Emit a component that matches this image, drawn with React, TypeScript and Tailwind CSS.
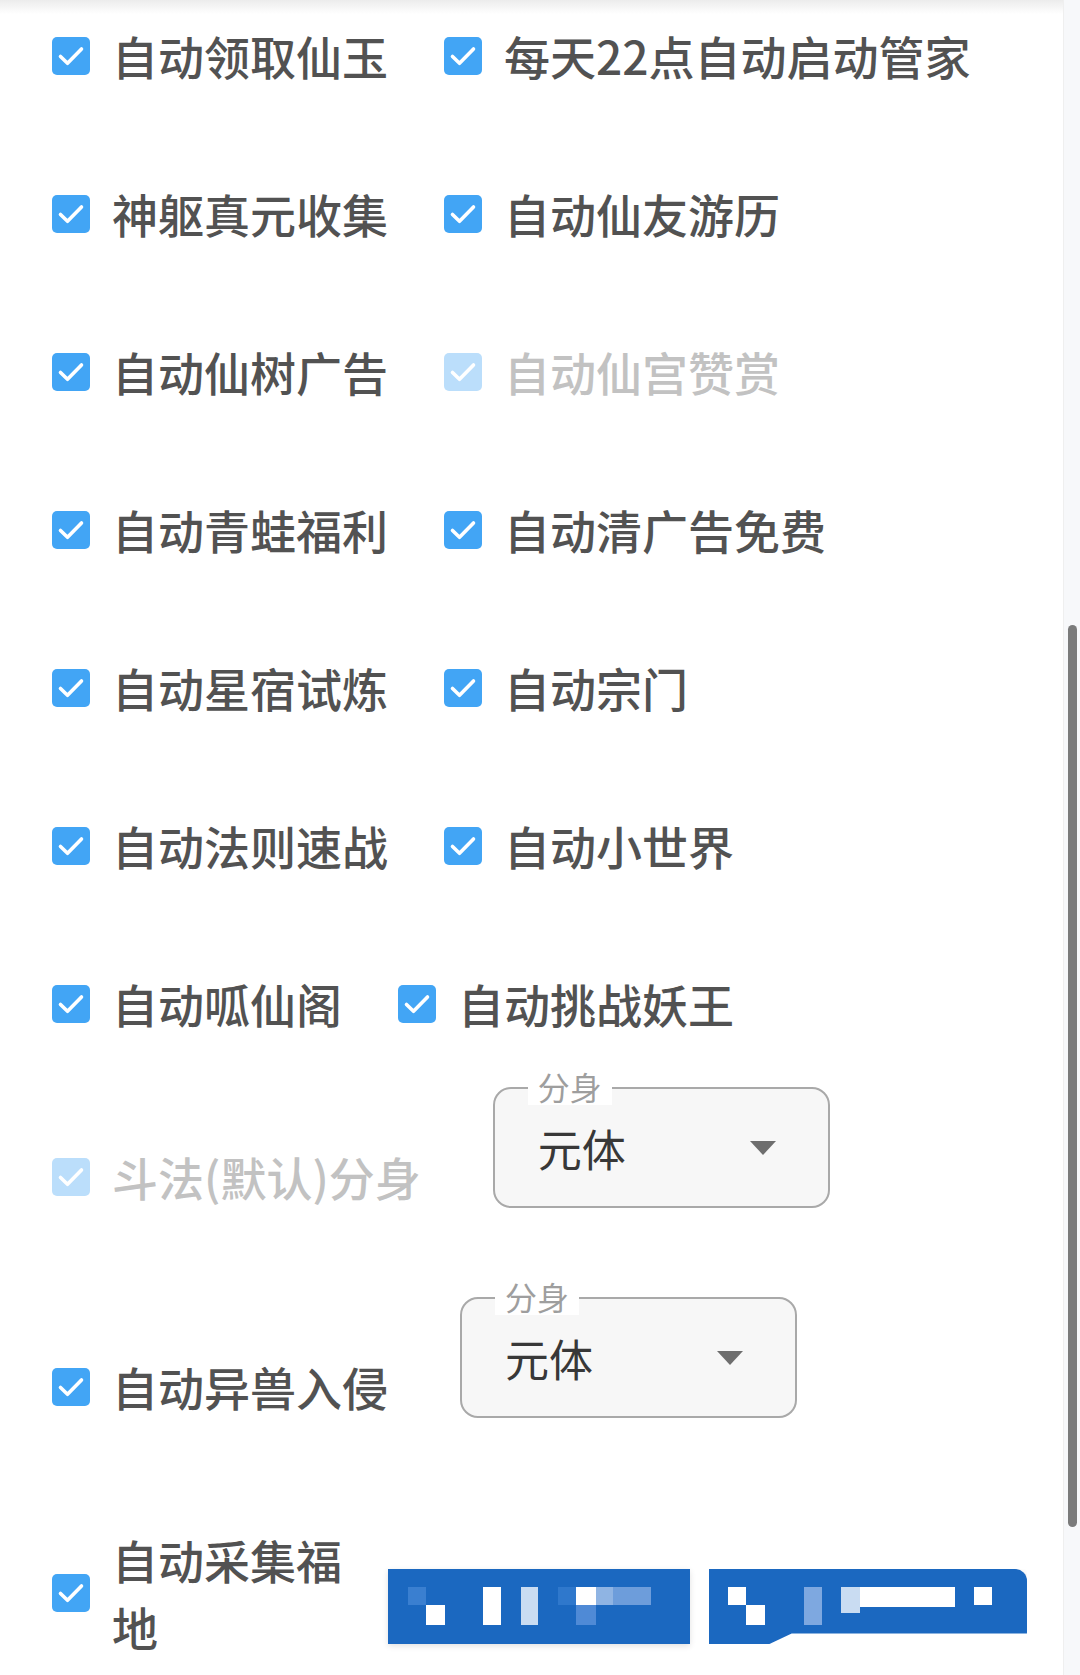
import React from "react";

const FONT = { fontFamily: '"Noto Sans CJK SC", "Noto Sans", sans-serif' };

function Check({ disabled }: { disabled?: boolean }) {
  return (
    <div
      className={
        "flex h-[38px] w-[38px] shrink-0 items-center justify-center rounded-[5px] " +
        (disabled ? "bg-[#bbdefb]" : "bg-[#42a5f5]")
      }
    >
      <svg width="38" height="38" viewBox="0 0 38 38" fill="none">
        <path d="M8.5 19.5l7 6.8L29.5 12" stroke="#ffffff" strokeWidth="3.6" strokeLinecap="round" strokeLinejoin="round" />
      </svg>
    </div>
  );
}

function Item({ label, disabled, first }: { label: string; disabled?: boolean; first?: boolean }) {
  return (
    <div className={"flex items-center " + (first ? "ml-[52px]" : "ml-[56px]")}>
      <Check disabled={disabled} />
      <span
        className={
          "ml-[22px] whitespace-nowrap text-[46px] font-medium leading-[67px] " +
          (disabled ? "text-[#c2c2c2]" : "text-[#525252]")
        }
      >
        {label}
      </span>
    </div>
  );
}

function Select() {
  return (
    <div className="mb-[58px] ml-[72px]">
      <div className="relative flex h-[121px] w-[337px] items-center justify-between rounded-[18px] border-2 border-[#a9a9a9] bg-[#f7f7f7] pl-[43px] pr-[52px]">
        <span className="absolute left-[33px] top-[-22px] bg-white px-[10px] text-[32px] leading-[38px] text-[#9e9e9e]">
          分身
        </span>
        <span className="text-[44px] leading-[60px] text-[#383838]">元体</span>
        <svg width="26" height="14" viewBox="0 0 26 14">
          <path d="M0 0h26L13 14z" fill="#6e6e6e" />
        </svg>
      </div>
    </div>
  );
}

type Block = { x: number; y: number; w: number; h: number; c: string };

function Mosaic({ w, h, blocks }: { w: number; h: number; blocks: Block[] }) {
  return (
    <svg width={w} height={h} viewBox={`0 0 ${w} ${h}`} className="block">
      {blocks.map((b, i) => (
        <rect key={i} x={b.x} y={b.y} width={b.w} height={b.h} fill={b.c} />
      ))}
    </svg>
  );
}

const b1: Block[] = [
  { x: 20, y: 18, w: 18, h: 18, c: "#3a7fd0" },
  { x: 38, y: 36, w: 19, h: 20, c: "#ffffff" },
  { x: 95, y: 18, w: 18, h: 38, c: "#ffffff" },
  { x: 133, y: 18, w: 17, h: 38, c: "#c9dcf2" },
  { x: 170, y: 18, w: 18, h: 18, c: "#2f78cc" },
  { x: 188, y: 18, w: 20, h: 18, c: "#ffffff" },
  { x: 208, y: 18, w: 17, h: 18, c: "#8fb4e3" },
  { x: 225, y: 18, w: 38, h: 18, c: "#6d9ddb" },
  { x: 188, y: 36, w: 20, h: 20, c: "#4f8ad6" },
];

const b2: Block[] = [
  { x: 19, y: 18, w: 18, h: 18, c: "#ffffff" },
  { x: 37, y: 36, w: 19, h: 20, c: "#ffffff" },
  { x: 95, y: 18, w: 18, h: 38, c: "#7ea8e0" },
  { x: 132, y: 18, w: 19, h: 26, c: "#c9dcf2" },
  { x: 151, y: 18, w: 95, h: 20, c: "#ffffff" },
  { x: 265, y: 18, w: 18, h: 18, c: "#ffffff" },
];

export default function App() {
  return (
    <div className="relative flex h-[1675px] w-[1080px] overflow-hidden bg-white" style={FONT}>
      <div className="pointer-events-none absolute left-0 top-0 h-[14px] w-[1063px] bg-gradient-to-b from-[#ececec] to-white" />
      <div className="flex w-[1063px] flex-col pt-[22px]">
        <div className="flex items-center">
          <Item first label="自动领取仙玉" />
          <Item label="每天22点自动启动管家" />
        </div>
        <div className="mt-[91px] flex items-center">
          <Item first label="神躯真元收集" />
          <Item label="自动仙友游历" />
        </div>
        <div className="mt-[91px] flex items-center">
          <Item first label="自动仙树广告" />
          <Item disabled label="自动仙宫赞赏" />
        </div>
        <div className="mt-[91px] flex items-center">
          <Item first label="自动青蛙福利" />
          <Item label="自动清广告免费" />
        </div>
        <div className="mt-[91px] flex items-center">
          <Item first label="自动星宿试炼" />
          <Item label="自动宗门" />
        </div>
        <div className="mt-[91px] flex items-center">
          <Item first label="自动法则速战" />
          <Item label="自动小世界" />
        </div>
        <div className="mt-[91px] flex items-center">
          <Item first label="自动呱仙阁" />
          <Item label="自动挑战妖王" />
        </div>
        <div className="mt-[50px] flex items-center">
          <Item first disabled label="斗法(默认)分身" />
          <Select />
        </div>
        <div className="mt-[31px] flex items-center">
          <Item first label="自动异兽入侵" />
          <Select />
        </div>
        <div className="mt-[50px] flex items-center">
          <div className="ml-[52px] flex items-center">
            <Check />
            <span className="ml-[22px] w-[232px] text-[46px] font-medium leading-[67px] text-[#525252]">自动采集福地</span>
          </div>
          <div className="ml-[44px] flex self-start pt-[43px]">
            <div className="h-[75px] w-[302px] bg-[#1b68c0] shadow-[0_2px_6px_rgba(0,0,0,0.12)]">
              <Mosaic w={302} h={75} blocks={b1} />
            </div>
            <div className="ml-[19px] h-[75px] w-[318px] rounded-r-[12px] bg-[#1b68c0] shadow-[0_2px_6px_rgba(0,0,0,0.12)] [clip-path:polygon(0_0,100%_0,100%_86%,26%_86%,19%_100%,0_100%)]">
              <Mosaic w={318} h={75} blocks={b2} />
            </div>
          </div>
        </div>
      </div>
      <div className="w-[17px] border-l border-[#efefef] bg-[#f7f8fa]">
        <div className="ml-[4px] mt-[625px] h-[902px] w-[9px] rounded-full bg-[#7b7b7b]" />
      </div>
    </div>
  );
}
